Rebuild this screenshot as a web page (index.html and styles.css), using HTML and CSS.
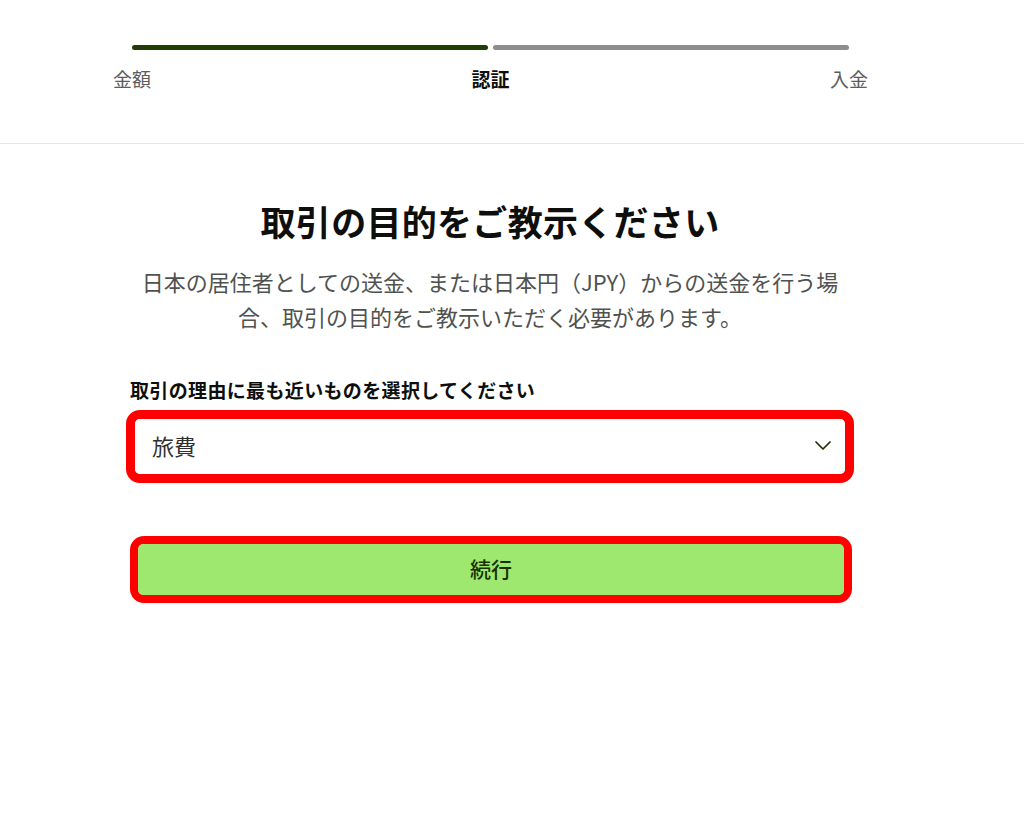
FILE: index.html
```html
<!DOCTYPE html>
<html lang="ja">
<head>
<meta charset="utf-8">
<title>取引の目的</title>
<link rel="stylesheet" href="styles.css">
</head>
<body>
<header class="stepper">
  <div class="bars">
    <div class="bar bar-done"></div>
    <div class="bar bar-todo"></div>
  </div>
  <div class="steps">
    <span class="step">金額</span>
    <span class="step step-active">認証</span>
    <span class="step">入金</span>
  </div>
</header>
<main class="content">
  <h1 class="title">取引の目的をご教示ください</h1>
  <p class="lead">日本の居住者としての送金、または日本円（JPY）からの送金を行う場合、取引の目的をご教示いただく必要があります。</p>
  <label class="field-label">取引の理由に最も近いものを選択してください</label>
  <div class="highlight highlight-select">
    <div class="select">
      <span class="select-value">旅費</span>
      <svg class="chevron" width="16" height="9" viewBox="0 0 16 9"><path d="M1 1 L8 8 L15 1" fill="none" stroke="#163300" stroke-width="1.7" stroke-linecap="round" stroke-linejoin="round"/></svg>
    </div>
  </div>
  <div class="highlight highlight-button">
    <button class="btn">続行</button>
  </div>
</main>
</body>
</html>
```

FILE: styles.css
```css
* { box-sizing: border-box; }
html, body { margin: 0; padding: 0; background: #ffffff; }
body {
  font-family: "Noto Sans CJK JP", "Noto Sans", sans-serif;
  color: #0e0f0c;
  width: 1024px;
  height: 836px;
  overflow: hidden;
}
.stepper {
  padding: 45px 0 52px 0;
  border-bottom: 1px solid #e6e6e6;
}
.bars {
  margin-left: 132px;
  width: 717px;
  display: flex;
  gap: 5px;
}
.bar {
  flex: 1;
  height: 5px;
  border-radius: 3px;
}
.bar-done { background: #1f3d05; }
.bar-todo { background: #8e8e8e; }
.steps {
  margin-left: 113px;
  width: 755px;
  margin-top: 17px;
  display: flex;
  justify-content: space-between;
}
.step {
  font-size: 19px;
  line-height: 24px;
  color: #5d5d5d;
}
.step-active {
  color: #0e0f0c;
  font-weight: 700;
}
.content {
  margin-left: 132px;
  width: 716px;
  display: flex;
  flex-direction: column;
}
.title {
  margin: 55px 0 0 0;
  font-size: 35px;
  line-height: 44px;
  font-weight: 700;
  text-align: center;
  color: #0e0f0c;
  letter-spacing: 0.3px;
}
.lead {
  margin: 21px 0 0 0;
  font-size: 22px;
  line-height: 35px;
  text-align: center;
  color: #505250;
}
.field-label {
  margin: 44px 0 0 -2px;
  font-size: 19px;
  line-height: 24px;
  font-weight: 700;
  color: #0e0f0c;
  letter-spacing: 0.35px;
}
.highlight {
  border: 9px solid #ff0000;
  border-radius: 14px;
}
.highlight-select {
  margin: 8px 0 0 -6px;
  width: 728px;
  height: 73px;
}
.select {
  height: 100%;
  border-radius: 5px;
  background: #ffffff;
  display: flex;
  align-items: center;
  justify-content: space-between;
  padding: 0 14px 4px 17px;
}
.select-value {
  font-size: 22px;
  color: #2f302e;
}
.chevron { display: block; margin-top: 2px; }
.highlight-button {
  margin: 53px 0 0 -2px;
  width: 722px;
  height: 67px;
  border-width: 8px;
  background: #9fe870;
}
.btn {
  width: 100%;
  height: 100%;
  border: 0;
  border-radius: 5px;
  background: #9fe870;
  font-family: "Noto Sans CJK JP", "Noto Sans", sans-serif;
  font-size: 21px;
  font-weight: 500;
  color: #163300;
  padding: 0 0 4px 0;
}
```
